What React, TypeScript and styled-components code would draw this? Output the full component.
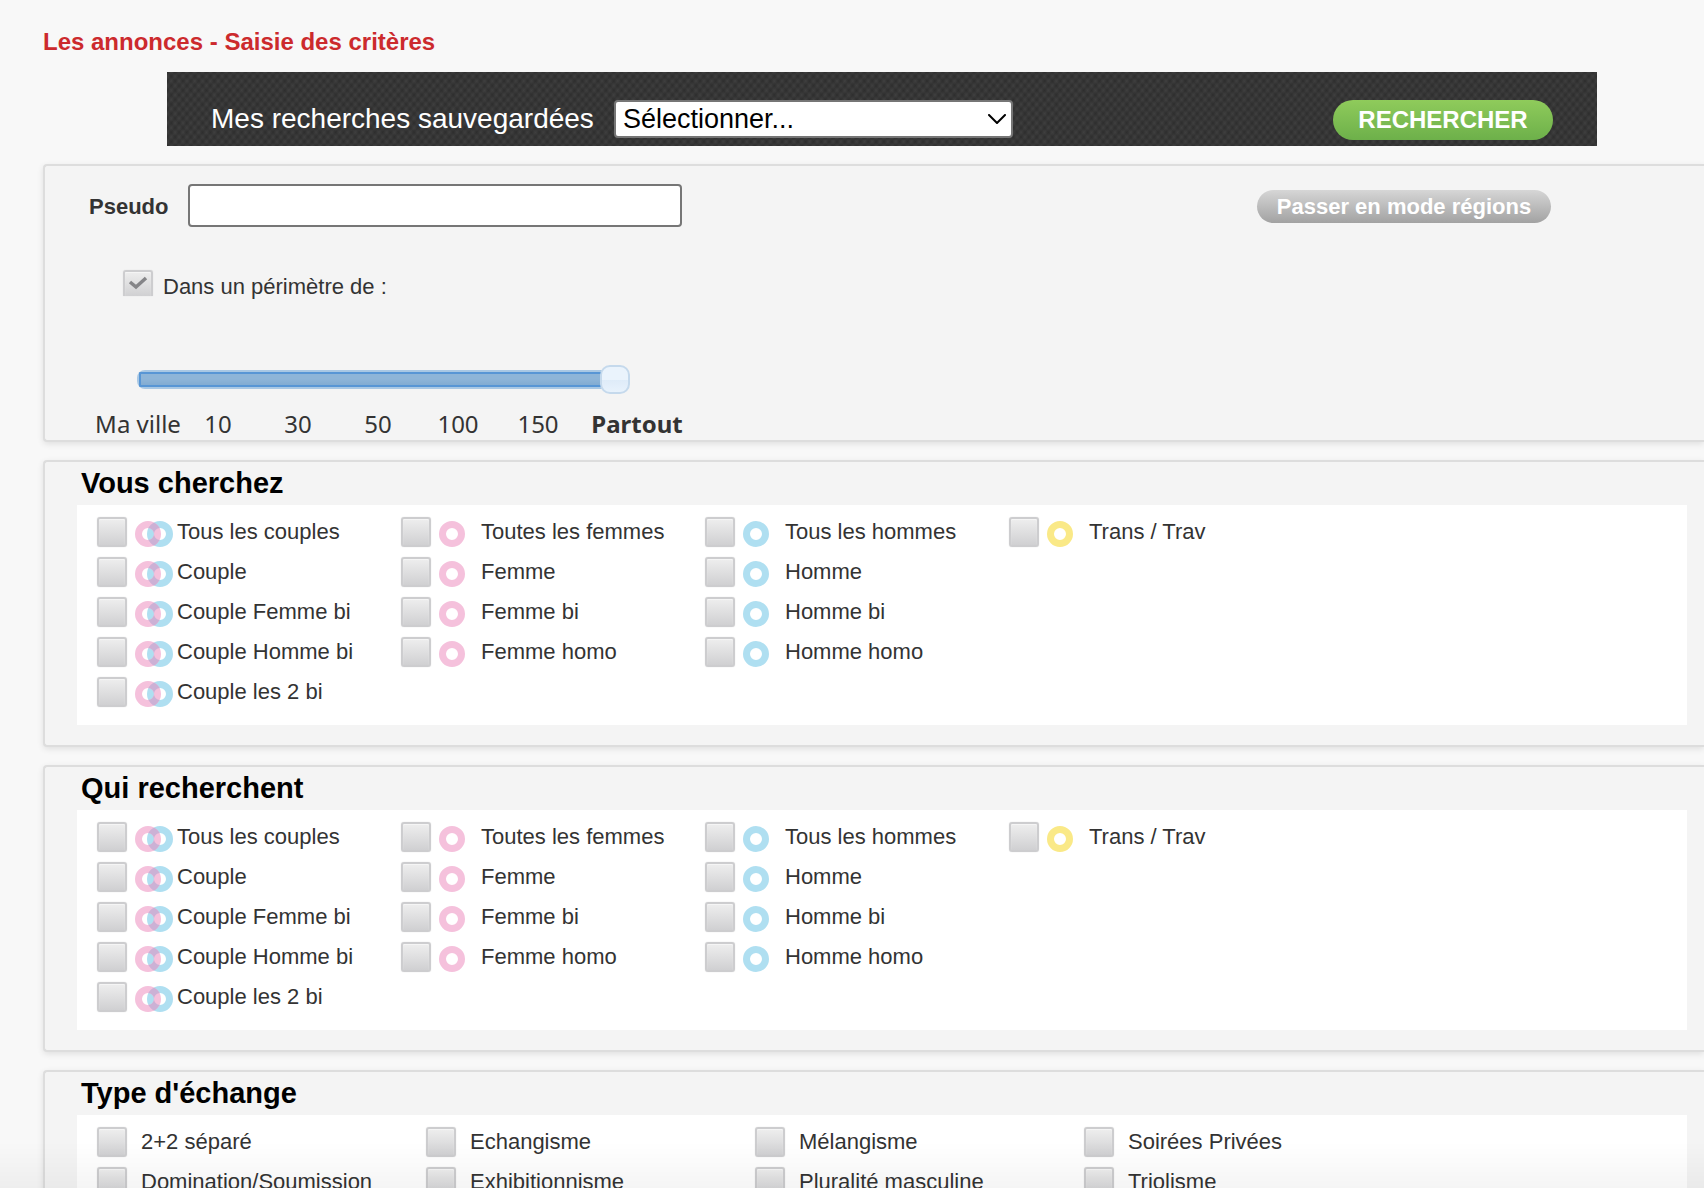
import React, { useId, useState } from "react";
import styled, { createGlobalStyle } from "styled-components";

const GlobalStyle = createGlobalStyle`
  *, *::before, *::after { box-sizing: border-box; }
  body {
    margin: 0;
    background: #f8f8f8;
    color: #333;
    font-family: Arial, "Liberation Sans", sans-serif;
    font-size: 22px;
    line-height: 26px;
  }
  button, input, select { font-family: inherit; margin: 0; }
`;

const Page = styled.main`
  height: 100vh;
  overflow: hidden auto;
  scrollbar-width: none;
  padding: 28px 0 0 43px;
`;

const BottomShade = styled.div`
  position: fixed;
  inset: auto 0 0;
  height: 46px;
  pointer-events: none;
  background: linear-gradient(rgba(0, 0, 0, 0), rgba(0, 0, 0, 0.04));
`;

const PageTitle = styled.h1`
  margin: 0 0 16px;
  color: #cc2a2d;
  font-size: 24px;
  line-height: 28px;
`;

const SavedBar = styled.form`
  display: flex;
  align-items: flex-start;
  height: 74px;
  margin: 0 107px 18px 124px;
  padding: 28px 44px 0;
  background-color: #353535;
  background-image:
    repeating-linear-gradient(50deg, rgba(0, 0, 0, 0.14) 0, transparent 3px, rgba(0, 0, 0, 0.14) 6px),
    repeating-linear-gradient(-50deg, rgba(255, 255, 255, 0.05) 0, transparent 3px, rgba(255, 255, 255, 0.05) 6px);
`;

const SavedLabel = styled.label`
  margin-right: 20px;
  color: #fff;
  font-size: 28px;
  line-height: 38px;
`;

const SelectWrap = styled.div`
  display: grid;
  width: 399px;
  align-items: center;

  & > * { grid-area: 1 / 1; }

  svg {
    justify-self: end;
    margin-right: 7px;
    pointer-events: none;
  }
`;

const SavedSelect = styled.select`
  appearance: none;
  width: 100%;
  height: 38px;
  padding: 0 36px 0 7px;
  border: 2px solid #767676;
  border-radius: 4px;
  background: #fff;
  color: #000;
  font-size: 27px;
  line-height: 34px;
`;

const SearchButton = styled.button`
  width: 220px;
  height: 40px;
  margin-left: auto;
  padding: 0;
  border: 0;
  border-radius: 20px;
  background: linear-gradient(#8fcb5b, #6db04a);
  color: #fff;
  font-size: 24px;
  font-weight: bold;
  line-height: 40px;
`;

const Panel = styled.section<{ $padding: string }>`
  margin-bottom: 18px;
  padding: ${(p) => p.$padding};
  border: 2px solid #ddd;
  border-right: 0;
  border-radius: 4px 0 0 4px;
  background: #f4f4f4;
  box-shadow: 0 2px 6px rgba(0, 0, 0, 0.1);
`;

const PseudoRow = styled.div`
  display: flex;
  align-items: center;
  height: 45px;
  padding: 0 153px 0 44px;
`;

const PseudoLabel = styled.label`
  width: 99px;
  font-weight: bold;
`;

const PseudoInput = styled.input`
  align-self: flex-start;
  width: 494px;
  height: 43px;
  padding: 0 8px;
  border: 2px solid #767676;
  border-radius: 4px;
  background: #fff;
  font-size: 22px;
`;

const RegionsButton = styled.button`
  width: 294px;
  height: 33px;
  margin-left: auto;
  padding: 0;
  border: 0;
  border-radius: 17px;
  background: linear-gradient(#d6d6d6, #a2a2a2);
  color: #fff;
  font-size: 22px;
  font-weight: bold;
  line-height: 33px;
`;

const Tick = styled.input<{ $clipped?: boolean }>`
  appearance: none;
  flex: none;
  width: 30px;
  height: ${(p) => (p.$clipped ? 26 : 30)}px;
  border: 2px solid #cdcdcf;
  border-bottom-width: ${(p) => (p.$clipped ? 0 : 2)}px;
  border-radius: ${(p) => (p.$clipped ? "3px 3px 0 0" : "3px")};
  background: linear-gradient(#eeeeee, #d0d0d2);
  box-shadow: inset 0 1px 1px #f6f6f6, 0 0 1px #ccc;
`;

const TickMark = styled.svg`
  pointer-events: none;
`;

const TickBox = styled.span`
  display: grid;
  place-items: center;
  & > * { grid-area: 1 / 1; }
`;

const PerimeterRow = styled.label`
  display: flex;
  align-items: flex-start;
  gap: 10px;
  width: max-content;
  margin: 41px 0 0 78px;

  & > span:last-child { padding-top: 4px; }
`;

const Slider = styled.input`
  appearance: none;
  display: block;
  width: 493px;
  height: 30px;
  margin: 64px 0 0 92px;
  background: transparent;

  &::-webkit-slider-runnable-track {
    height: 19px;
    border-radius: 8px;
    background:
      linear-gradient(#5896d5, #5896d5) 2px 2px / 2px 15px no-repeat,
      linear-gradient(#5896d5 2px, #8eb5d8 2px 7px, #82acd2 13px, #5896d5 13px) 2px 2px / calc(100% - 4px) 15px no-repeat,
      #a9c8e4;
  }

  &::-webkit-slider-thumb {
    appearance: none;
    width: 30px;
    height: 29px;
    margin-top: -5px;
    border: 2px solid #c5d9ec;
    border-radius: 10px;
    background: linear-gradient(#eaf3fc 50%, #deebf8 50%, #e8f2fc);
  }
`;

const Scale = styled.div`
  display: flex;
  margin: 15px 0 0 53px;
  font-family: "Lucida Grande", "Noto Sans", "Open Sans", sans-serif;
  font-size: 24px;
  line-height: 30px;
`;

const ScaleStep = styled.span<{ $last?: boolean }>`
  display: flex;
  justify-content: center;
  width: ${(p) => (p.$last ? 118 : 80)}px;
  white-space: nowrap;
  font-weight: ${(p) => (p.$last ? "bold" : "normal")};
`;

const PanelTitle = styled.h2`
  margin: 0 0 0 36px;
  color: #000;
  font-size: 29px;
  line-height: 43px;
`;

const Criteria = styled.div<{ $column: number }>`
  display: grid;
  grid-template-columns: repeat(4, ${(p) => p.$column}px);
  margin: 0 17px 20px 32px;
  padding: 12px 20px 8px;
  background: #fff;
`;

const Option = styled.label`
  display: flex;
  align-items: flex-start;
  height: 40px;
  white-space: nowrap;
`;

const OptionIcon = styled.span`
  flex: none;
  width: 42px;
  height: 26px;
  margin: 4px 0 0 8px;
  svg { display: block; }
`;

const OptionText = styled.span<{ $gap: number }>`
  margin-left: ${(p) => p.$gap}px;
  line-height: 30px;
`;

type Kind = "couple" | "femme" | "homme" | "trans";

const ringColor = { femme: "#f5c1dc", homme: "#afdff1", trans: "#fae987" };

function KindIcon({ kind }: { kind: Kind }) {
  const clipId = useId();
  if (kind === "couple") {
    return (
      <svg width="38" height="26" viewBox="0 0 38 26" fill="none" strokeWidth="7" aria-hidden="true">
        <circle cx="25" cy="13" r="9.5" stroke="#afdff1" />
        <circle cx="13" cy="13" r="9.5" stroke="#f5c1dc" />
        <clipPath id={clipId}>
          <path clipRule="evenodd" d="M0 13a13 13 0 1 0 26 0a13 13 0 1 0-26 0M7 13a6 6 0 1 0 12 0a6 6 0 1 0-12 0" />
        </clipPath>
        <circle cx="25" cy="13" r="9.5" stroke="#ccb1d5" clipPath={`url(#${clipId})`} />
      </svg>
    );
  }
  return (
    <svg width="26" height="26" viewBox="0 0 26 26" fill="none" aria-hidden="true">
      <circle cx="13" cy="13" r="9.5" stroke={ringColor[kind]} strokeWidth="7" />
    </svg>
  );
}

const profileRows: [Kind, string][][] = [
  [["couple", "Tous les couples"], ["femme", "Toutes les femmes"], ["homme", "Tous les hommes"], ["trans", "Trans / Trav"]],
  [["couple", "Couple"], ["femme", "Femme"], ["homme", "Homme"]],
  [["couple", "Couple Femme bi"], ["femme", "Femme bi"], ["homme", "Homme bi"]],
  [["couple", "Couple Homme bi"], ["femme", "Femme homo"], ["homme", "Homme homo"]],
  [["couple", "Couple les 2 bi"]],
];

const exchangeTypes = [
  "2+2 séparé", "Echangisme", "Mélangisme", "Soirées Privées",
  "Domination/Soumission", "Exhibitionnisme", "Pluralité masculine", "Triolisme",
];

const steps = ["Ma ville", "10", "30", "50", "100", "150", "Partout"];

const columnStart = { couple: 1, femme: 2, homme: 3, trans: 4 };

const ProfileOption = styled(Option)<{ $kind: Kind }>`
  grid-column: ${(p) => columnStart[p.$kind]};
`;

function ProfilePanel({ title }: { title: string }) {
  return (
    <Panel $padding="0">
      <PanelTitle>{title}</PanelTitle>
      <Criteria $column={304}>
        {profileRows.flat().map(([kind, text]) => (
          <ProfileOption key={text} $kind={kind}>
            <Tick type="checkbox" />
            <OptionIcon><KindIcon kind={kind} /></OptionIcon>
            <OptionText $gap={0}>{text}</OptionText>
          </ProfileOption>
        ))}
      </Criteria>
    </Panel>
  );
}

export default function App() {
  const id = useId();
  const [nearby, setNearby] = useState(true);

  return (
    <>
      <GlobalStyle />
      <Page>
        <PageTitle>Les annonces - Saisie des critères</PageTitle>

        <SavedBar onSubmit={(e) => e.preventDefault()}>
          <SavedLabel htmlFor={`${id}-saved`}>Mes recherches sauvegardées</SavedLabel>
          <SelectWrap>
            <SavedSelect id={`${id}-saved`}>
              <option>Sélectionner...</option>
            </SavedSelect>
            <svg width="18" height="10" viewBox="0 0 18 10" fill="none" stroke="#000" strokeWidth="2" strokeLinecap="round" strokeLinejoin="round" aria-hidden="true">
              <path d="M1 1l8 8 8-8" />
            </svg>
          </SelectWrap>
          <SearchButton type="submit">RECHERCHER</SearchButton>
        </SavedBar>

        <Panel $padding="18px 0 1px">
          <PseudoRow>
            <PseudoLabel htmlFor={`${id}-pseudo`}>Pseudo</PseudoLabel>
            <PseudoInput id={`${id}-pseudo`} type="text" />
            <RegionsButton type="button">Passer en mode régions</RegionsButton>
          </PseudoRow>

          <PerimeterRow>
            <TickBox>
              <Tick $clipped type="checkbox" checked={nearby} onChange={(e) => setNearby(e.target.checked)} />
              {nearby && (
                <TickMark width="20" height="14" viewBox="0 0 20 14" fill="none" stroke="#858588" strokeWidth="3.5" aria-hidden="true">
                  <path d="M2 6l6 5L18 2" />
                </TickMark>
              )}
            </TickBox>
            <span>Dans un périmètre de :</span>
          </PerimeterRow>

          <Slider type="range" min={0} max={6} defaultValue={6} aria-label="Périmètre" />
          <Scale>
            {steps.map((step, i) => (
              <ScaleStep key={step} $last={i === steps.length - 1}>{step}</ScaleStep>
            ))}
          </Scale>
        </Panel>

        <ProfilePanel title="Vous cherchez" />
        <ProfilePanel title="Qui recherchent" />

        <Panel $padding="0">
          <PanelTitle>Type d'échange</PanelTitle>
          <Criteria $column={329}>
            {exchangeTypes.map((text) => (
              <Option key={text}>
                <Tick type="checkbox" />
                <OptionText $gap={14}>{text}</OptionText>
              </Option>
            ))}
          </Criteria>
        </Panel>
      </Page>
      <BottomShade />
    </>
  );
}
